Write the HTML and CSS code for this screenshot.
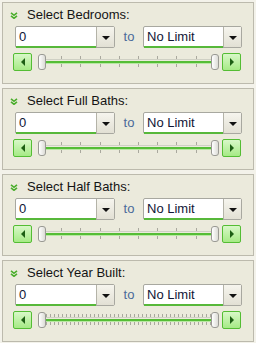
FILE: index.html
```html
<!DOCTYPE html>
<html>
<head>
<meta charset="utf-8">
<link rel="stylesheet" href="styles.css">
</head>
<body>
<div class="list">
  <div class="panel">
    <div class="head"><svg class="chev" width="8" height="7" viewBox="0 0 8 7"><polyline points="1,0.8 4,3.3 7,0.8"/><polyline points="1,3.8 4,6.3 7,3.8"/></svg><span class="title">Select Bedrooms:</span></div>
    <div class="selrow">
      <div class="sel s1"><div class="val">0</div><div class="drop"><span class="tri"></span></div></div>
      <div class="to">to</div>
      <div class="sel s2"><div class="val">No Limit</div><div class="drop"><span class="tri"></span></div></div>
    </div>
    <div class="slrow">
      <div class="btn"><span class="larr"></span></div>
      <div class="track"><div class="ticks"></div><div class="range"></div><div class="thumb tl"></div><div class="thumb tr"></div></div>
      <div class="btn"><span class="rarr"></span></div>
    </div>
  </div>
  <div class="panel">
    <div class="head"><svg class="chev" width="8" height="7" viewBox="0 0 8 7"><polyline points="1,0.8 4,3.3 7,0.8"/><polyline points="1,3.8 4,6.3 7,3.8"/></svg><span class="title">Select Full Baths:</span></div>
    <div class="selrow">
      <div class="sel s1"><div class="val">0</div><div class="drop"><span class="tri"></span></div></div>
      <div class="to">to</div>
      <div class="sel s2"><div class="val">No Limit</div><div class="drop"><span class="tri"></span></div></div>
    </div>
    <div class="slrow">
      <div class="btn"><span class="larr"></span></div>
      <div class="track"><div class="ticks"></div><div class="range"></div><div class="thumb tl"></div><div class="thumb tr"></div></div>
      <div class="btn"><span class="rarr"></span></div>
    </div>
  </div>
  <div class="panel">
    <div class="head"><svg class="chev" width="8" height="7" viewBox="0 0 8 7"><polyline points="1,0.8 4,3.3 7,0.8"/><polyline points="1,3.8 4,6.3 7,3.8"/></svg><span class="title">Select Half Baths:</span></div>
    <div class="selrow">
      <div class="sel s1"><div class="val">0</div><div class="drop"><span class="tri"></span></div></div>
      <div class="to">to</div>
      <div class="sel s2"><div class="val">No Limit</div><div class="drop"><span class="tri"></span></div></div>
    </div>
    <div class="slrow">
      <div class="btn"><span class="larr"></span></div>
      <div class="track"><div class="ticks"></div><div class="range"></div><div class="thumb tl"></div><div class="thumb tr"></div></div>
      <div class="btn"><span class="rarr"></span></div>
    </div>
  </div>
  <div class="panel">
    <div class="head"><svg class="chev" width="8" height="7" viewBox="0 0 8 7"><polyline points="1,0.8 4,3.3 7,0.8"/><polyline points="1,3.8 4,6.3 7,3.8"/></svg><span class="title">Select Year Built:</span></div>
    <div class="selrow">
      <div class="sel s1"><div class="val">0</div><div class="drop"><span class="tri"></span></div></div>
      <div class="to">to</div>
      <div class="sel s2"><div class="val">No Limit</div><div class="drop"><span class="tri"></span></div></div>
    </div>
    <div class="slrow">
      <div class="btn"><span class="larr"></span></div>
      <div class="track"><div class="ticks dense"></div><div class="range"></div><div class="thumb tl"></div><div class="thumb tr"></div></div>
      <div class="btn"><span class="rarr"></span></div>
    </div>
  </div>
</div>
</body>
</html>
```
FILE: styles.css
```css
html, body { margin: 0; padding: 0; }
body {
  background: #f3f2ea;
  font-family: "Liberation Sans", Arial, sans-serif;
  width: 256px;
  height: 343px;
  overflow: hidden;
}
.list {
  padding: 2px 2px 0 2px;
  display: flex;
  flex-direction: column;
  gap: 4px;
}
.panel {
  box-sizing: border-box;
  width: 252px;
  height: 82px;
  border: 1px solid #bcbaad;
  background: #ebeadc;
  padding: 3px 0 0 7px;
}
.head {
  height: 17px;
  display: flex;
  align-items: center;
}
.chev {
  width: 8px;
  height: 7px;
  margin-right: 9px;
  margin-top: 1px;
}
.chev polyline {
  fill: none;
  stroke: #4aae2c;
  stroke-width: 1.6;
}
.title {
  font-size: 13px;
  color: #141414;
}
.selrow {
  margin-top: 3px;
  height: 22px;
  display: flex;
  padding-left: 5px;
}
.sel {
  box-sizing: border-box;
  height: 22px;
  border: 1px solid #a8a8a0;
  border-radius: 2px;
  background: #fff;
  display: flex;
  position: relative;
}
.s1 { width: 100px; }
.s2 { width: 99px; }
.val {
  flex: 1;
  font-size: 13px;
  color: #0f1636;
  line-height: 19px;
  padding-left: 3px;
  border-bottom: 2px solid #57b83a;
  margin-bottom: -1px;
}
.drop {
  width: 17px;
  border-left: 1px solid #b4b3a8;
  background: linear-gradient(#f6f5ee, #e2e0d4);
  display: flex;
  align-items: center;
  justify-content: center;
}
.tri {
  width: 0;
  height: 0;
  border-left: 4px solid transparent;
  border-right: 4px solid transparent;
  border-top: 4px solid #111;
  margin-top: 1px;
}
.to {
  width: 28px;
  text-align: center;
  font-size: 13px;
  line-height: 22px;
  color: #4a6a9a;
}
.slrow {
  margin-top: 5px;
  height: 18px;
  display: flex;
  padding-left: 3px;
  width: 228px;
}
.btn {
  box-sizing: border-box;
  width: 19px;
  height: 18px;
  border: 1px solid #54bd34;
  border-radius: 2px;
  background: linear-gradient(#d8f8c8, #a6ea86);
  display: flex;
  align-items: center;
  justify-content: center;
}
.larr, .rarr { width: 0; height: 0; border-top: 4px solid transparent; border-bottom: 4px solid transparent; }
.larr { border-right: 4px solid #1d5e14; }
.rarr { border-left: 4px solid #1d5e14; }
.track {
  flex: 1;
  position: relative;
  margin: 0 1px;
}
.ticks {
  position: absolute;
  left: 9px;
  right: 8px;
  top: 3px;
  height: 11px;
  background: repeating-linear-gradient(90deg, #a9a89e 0 1px, transparent 1px 19.2px);
}
.ticks.dense {
  background: repeating-linear-gradient(90deg, #a9a89e 0 1px, transparent 1px 4px);
}
.range {
  position: absolute;
  left: 9px;
  right: 8px;
  top: 6px;
  height: 5px;
  background: linear-gradient(#cfd0c4 0 1px, #ebeadc 1px 2px, #55bd36 2px 4px, #b8e8a2 4px 5px);
}
.thumb {
  position: absolute;
  top: 1px;
  width: 8px;
  height: 16px;
  box-sizing: border-box;
  border: 1px solid #9a9a94;
  border-radius: 3px;
  background: linear-gradient(90deg, #fff, #dcdcd6);
}
.tl { left: 5px; }
.tr { right: 2px; }
```
